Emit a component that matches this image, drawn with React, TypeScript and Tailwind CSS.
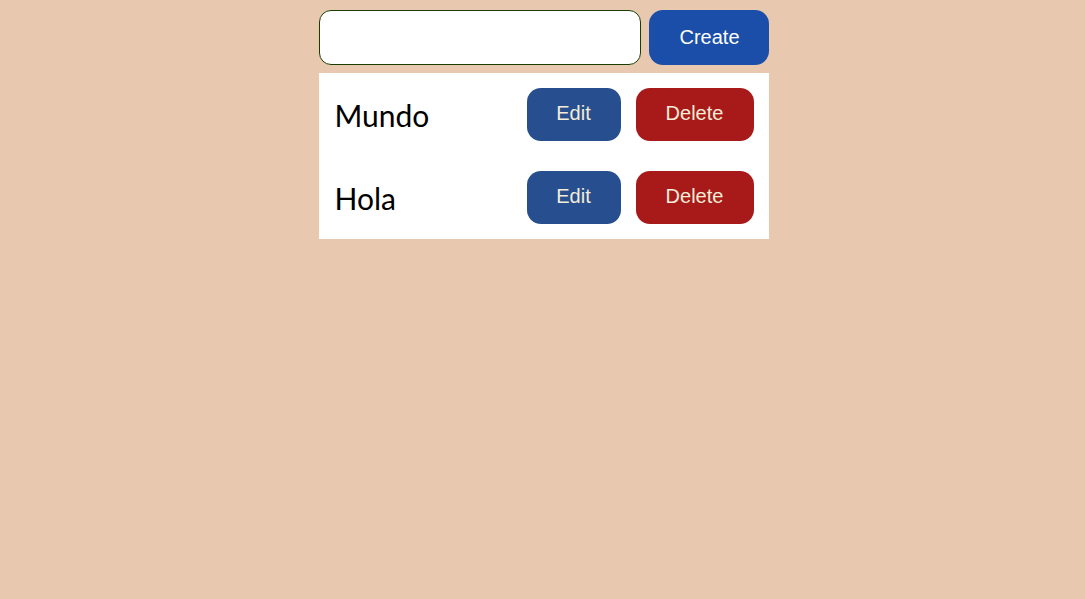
export default function App() {
  const items = ["Mundo", "Hola"];
  return (
    <div className="min-h-[599px] w-full bg-[#e8c9b0] pl-[2px] pt-[10px]">
      <div className="mx-auto flex w-[450px] flex-col gap-2">
        <div className="flex gap-2">
          <input className="h-[55px] w-[322px] rounded-[12px] border border-[#1a3d00] bg-white px-3 outline-none" />
          <button className="h-[55px] flex-1 rounded-[14px] bg-[#1a4ea8] pb-[2px] pl-[2px] text-[20px] text-white font-['Liberation_Sans',Arial,sans-serif]">
            Create
          </button>
        </div>
        <div className="flex flex-col gap-[30px] bg-white p-[15px]">
          {items.map((t) => (
            <div key={t} className="flex h-[53px] items-center">
              <span className="flex-1 pl-px pt-[2px] text-[30px] font-normal text-black font-['Lato',sans-serif]">
                {t}
              </span>
              <button className="mr-[15px] h-[53px] w-[94px] rounded-[14px] bg-[#274f8f] pb-[3px] text-[20px] text-[#f3ecd8] font-['Liberation_Sans',Arial,sans-serif]">
                Edit
              </button>
              <button className="h-[53px] w-[118px] rounded-[14px] bg-[#a81a1a] pb-[3px] text-[20px] text-[#f3ecd8] font-['Liberation_Sans',Arial,sans-serif]">
                Delete
              </button>
            </div>
          ))}
        </div>
      </div>
    </div>
  );
}
